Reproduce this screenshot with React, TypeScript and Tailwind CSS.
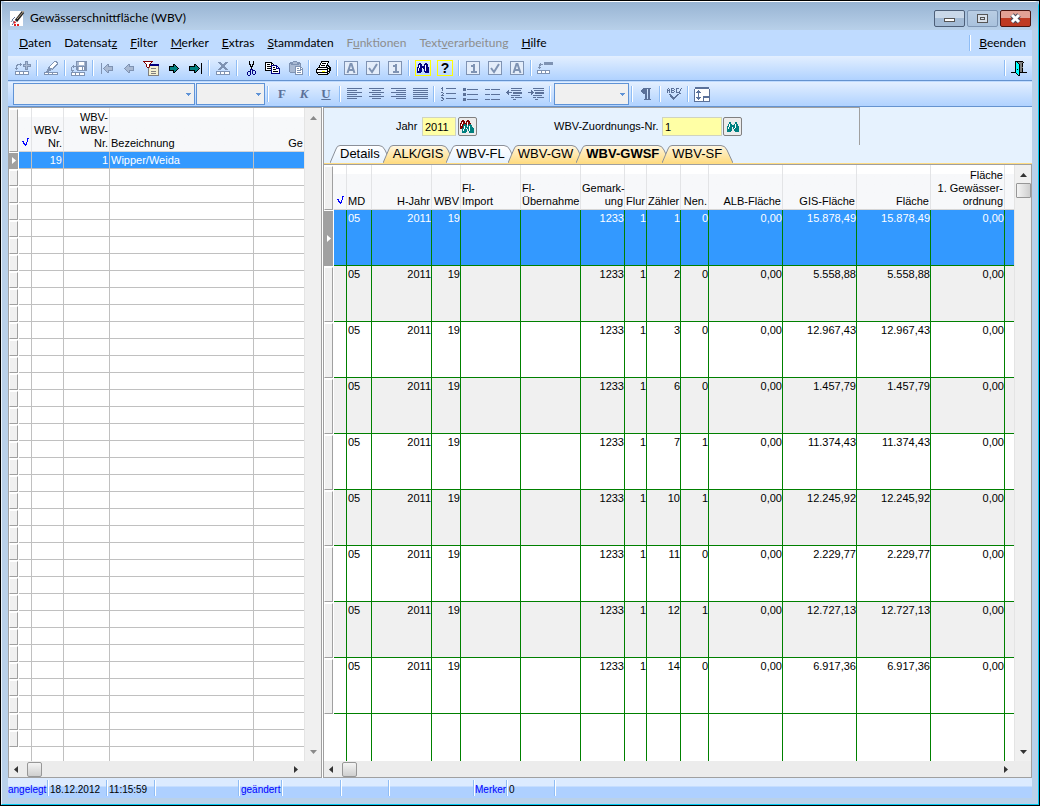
import type { ReactNode } from "react";
import { clsx } from "clsx";

const palette: Record<string, string> = {
    g: "#7f93b3",
    a: "#a9b9d2",
    d: "#5b7199",
    k: "#000000",
    w: "#ffffff",
    s: "#808080",
    t: "#008080",
    c: "#00ffff",
    b: "#000080",
    r: "#800000",
    y: "#ffff00",
    e: "#f4f0d0",
    u: "#0000ff",
};

const glyphs = {
    add: [
        "..........ggg...",
        "..........gag...",
        ".....g....gag...",
        "..ggggg.gggagggg",
        ".gg..g..gaaaaaag",
        ".g......gggagggg",
        ".g........gag...",
        "ggg.......gag...",
        ".g........ggg...",
        "................",
        "gggggggggggggg..",
        "gwwwgwwwgwwwwg..",
        "gwwwgwwwgwwwwg..",
        "gggggggggggggg..",
    ],
    edit: [
        "..........ggg..",
        ".........gwwgg.",
        "........gwwwwg.",
        ".......gwwwwgg.",
        "......gwwwwgg..",
        ".....gwwwwgg...",
        "....ggwwwgg....",
        "....ggggag.....",
        "...ggggag......",
        "...gggg........",
        "..ggg..........",
        "gggggggggggggg.",
        "gwwwgwwwgwwwwg.",
        "gggggggggggggg.",
    ],
    save: [
        ".....ggggggggggg",
        ".....gaawwwwwagg",
        ".....gaawwwwwagg",
        ".....gaawwwwwagg",
        "..g..gaaaaaaaagg",
        ".ggggggggggggggg",
        "g.g..ggawwwgwggg",
        "g....ggawwwgwggg",
        "g....ggawwwgwggg",
        "ggg...gggggggggg",
        ".g..............",
        "gggggggggggggg..",
        "gwwwgwwwgwwwwg..",
        "gwwwgwwwgwwwwg..",
        "gggggggggggggg..",
    ],
    first: [
        "g............",
        "g.....gg.....",
        "g....gag.....",
        "g...gaaggggg.",
        "g..gaaaaaaag.",
        "g.gaaaaaaaag.",
        "g..gaaaaaaag.",
        "g...gaaggggg.",
        "g....gag.....",
        "g.....gg.....",
        "g............",
    ],
    prev: [
        "....gg.....",
        "...gag.....",
        "..gaaggggg.",
        ".gaaaaaaag.",
        "gaaaaaaaag.",
        ".gaaaaaaag.",
        "..gaaggggg.",
        "...gag.....",
        "....gg.....",
    ],
    next: [
        ".....kk....",
        ".....ktk...",
        ".kkkkkttk..",
        ".ktttttttk.",
        ".kttttttttk",
        ".ktttttttk.",
        ".kkkkkttk..",
        ".....ktk...",
        ".....kk....",
    ],
    last: [
        "............k",
        ".....kk.....k",
        ".....ktk....k",
        "kkkkkkttk...k",
        "kttttttttk..k",
        "ktttttttttk.k",
        "kttttttttk..k",
        "kkkkkkttk...k",
        ".....ktk....k",
        ".....kk.....k",
        "............k",
    ],
    filter: [
        "rrrrrrrrrr......",
        ".rwwwwwwr.......",
        "..rwwwwr........",
        "...rwwrbbbbbbbbb",
        "...rwwrbbbbbbbbb",
        "...rwwreeeeeeees",
        "....rrseeeeeeees",
        ".....seesssssees",
        ".....seeeeeeeees",
        ".....seeeeeeeees",
        ".....seesssssees",
        ".....seeeeeeeees",
        ".....seesssssees",
        ".....seeeeeeeees",
        ".....sssssssssss",
    ],
    remove: [
        "..ggg....ggg.",
        "...ggg..ggg..",
        "....gggggg...",
        ".....gggg....",
        ".....gggg....",
        "....gggggg...",
        "...ggg..ggg..",
        "..ggg....ggg.",
        ".............",
        "gggggggggggggg",
        "gwwwgwwwgwwwwg",
        "gwwwgwwwgwwwwg",
        "gggggggggggggg",
    ],
    cut: [
        "..k...k..",
        "..k...k..",
        "..k...k..",
        "..kk.kk..",
        "...k.k...",
        "...kkk...",
        "....k....",
        "....k....",
        "...bbb...",
        "...b.bbb.",
        ".bbb.b..b",
        "b..b.b..b",
        "b..b.b..b",
        "b..b..bb.",
        ".bb......",
    ],
    copy: [
        "kkkkkkk.........",
        "kwwwwwkk........",
        "kwkkkwkwk.......",
        "kwwwwwbbbbbb....",
        "kwkkkkbwwwwbb...",
        "kwwwwwbwkkwbwb..",
        "kwkkkkbwwwwbbbb.",
        "kwwwwwbwkkkwwwb.",
        "kkkkkkbwwwwwwwb.",
        "......bwkkkkkwb.",
        "......bwwwwwwwb.",
        "......bbbbbbbbb.",
    ],
    paste: [
        ".....gggg......",
        "..gggaaaaggg...",
        ".ggggaaaagggg..",
        ".gaggggggggag..",
        ".gaaaaaaaaaag..",
        ".gaaaaagggggg..",
        ".gaaaaagwwwwgg.",
        ".gaaaaagwggwgwg",
        ".gaaaaagwwwwggg",
        ".gaaaaagwggggwg",
        ".gaaaaagwwwwwwg",
        "..ggggggwggggwg",
        ".......gwwwwwwg",
        ".......gggggggg",
    ],
    print: [
        ".....kkkkkkkk..",
        ".....kwwwwwwk..",
        "....kwkkkkwk...",
        "....kwwwwwwk...",
        "...kwkkkkwkkk..",
        "...kwwwwwwk.kk.",
        "..kkkkkkkkkkwkk",
        ".kwwwwwwwwwkkkk",
        "kkkkkkkkkkkkwkk",
        "kwwwwwwwwwwkwkk",
        "kwwwwwyyywwkkk.",
        "kkkkkkkkkkkkwk.",
        ".kwwwwwwwwwkk..",
        "..kkkkkkkkkk...",
    ],
    binoculars: [
        "..bb....bb..",
        ".bbbb..bbbb.",
        ".bwbb..bwbb.",
        ".bwbbbbbwbb.",
        "bbwbbbbbwbbb",
        "bwbbbwbbwbbb",
        "bwbbb..bwbbb",
        "bwbbb..bwbbb",
        "bbbbb..bbbbb",
        "bbbb....bbbb",
    ],
    find: [
        "...tt....tt..",
        "...tt....tt..",
        "..twtt..twtt.",
        "..twtttttwtt.",
        ".ttwtttttwttt",
        ".twtttwttwttt",
        ".twttt.twtttt",
        ".ttttt..ttttt",
        ".ttttt..ttttt",
        ".tttt....tttt",
    ],
    findRed: [
        "..rr...rr......",
        ".rrrr.rrrr.....",
        ".rwrr.rwrr.....",
        "rrwrrrrwrrr....",
        "rwrrttrwrtt....",
        "rwrtttt.tttt...",
        "rrrtwtt.twtt...",
        "rrrtwttttwttt..",
        "rrttwtwttwtttt.",
        "..twttt.twtttt.",
        "..twttt.twtttt.",
        "..ttttt..ttttt.",
        "..tttt...ttttt.",
    ],
    relation: [
        ".......ggggggggg",
        "...g...ggggggggg",
        "..gggg.ggggggggg",
        "..gg............",
        "..g.............",
        ".ggg............",
        "..g.............",
        "................",
        "ggggggggggggg...",
        "gwwwgwwwgwwwg...",
        "gwwwgwwwgwwwg...",
        "ggggggggggggg...",
    ],
    exit: [
        "....kkkkkkkk....",
        "....kcksssssk...",
        "....kccksssk....",
        "....kccckssk....",
        "....kccckssk....",
        "....kccckssk....",
        "....kcccksss....",
        "....kccckssk....",
        "....kckckssk....",
        "....kccckssk....",
        "....kccckssk....",
        "kkkkkccckkkkkkkk",
        ".....kcck.......",
        "......kck.......",
        ".......kk.......",
    ],
    numbered: [
        ".d.............",
        "dd...dddddddddd",
        ".d.............",
        ".d.............",
        "...............",
        "dd.............",
        "..d..dddddddddd",
        ".d.............",
        "ddd............",
        "...............",
        "dd.............",
        ".dd..dddddddddd",
        "..d............",
        "dd.............",
    ],
    bullets: [
        "ddd............",
        "ddd.ddddddddddd",
        "ddd............",
        "...............",
        "...............",
        "ddd............",
        "ddd.ddddddddddd",
        "ddd............",
        "...............",
        "...............",
        "ddd............",
        "ddd.ddddddddddd",
        "ddd............",
    ],
    dashes: [
        "ddddd.ddddddddd",
        "...............",
        "...............",
        "...............",
        "...............",
        "ddddd.ddddddddd",
        "...............",
        "...............",
        "...............",
        "...............",
        "ddddd.ddddddddd",
    ],
    outdent: [
        ".....ddddddddddd",
        "................",
        "..d..dddddddddd.",
        ".dd.............",
        "dddddd.ddddddddd",
        ".dd....ddddddddd",
        "..d.............",
        ".....ddddddddd..",
        "................",
        ".....ddd.ddddddd",
        "................",
        ".......ddd......",
    ],
    indent: [
        ".....ddddddddddd",
        "................",
        "...d..dddddddddd",
        "...dd...........",
        "dddddd.ddddddddd",
        "...dd..ddddddddd",
        "...d............",
        ".....ddddddddd..",
        "................",
        ".....ddd.ddddddd",
        "................",
        ".......ddd......",
    ],
    pilcrow: [
        "..dddddddd",
        ".ddddd.dd.",
        "dddddd.dd.",
        "dddddd.dd.",
        ".ddddd.dd.",
        "..dddd.dd.",
        "....dd.dd.",
        "....dd.dd.",
        "....dd.dd.",
        "....dd.dd.",
        "....dd.dd.",
        "...ddddddd",
    ],
    spell: [
        ".d..ddd..ddd..d",
        "d.d.d..d.d...d.",
        "ddd.ddd..d...d.",
        "d.d.d..d.d..d..",
        "d.d.ddd..dddd..",
        "............dd.",
        "..dd......dd...",
        "...dd....dd....",
        "...ddd..dd.....",
        "....ddddd......",
        ".....ddd.......",
        "......d........",
    ],
    rowHeight: [
        ".dddddddddddddd.",
        ".dddddddddddddd.",
        "dwwwwwwwwwwwwwwd",
        "dwwwdwwwwwwwwwwd",
        "dwwdddwwwwwwwwwd",
        "dwdddddwwwwwwwwd",
        "dwwwdwwwwwwwwwwd",
        "dwwwdwwwwwwwwwwd",
        "dwwwdwwwwwwwwwwd",
        "dwwwdwwwwddddddd",
        "dwdddddwwddddddd",
        "dwwdddwwwdwwwwwd",
        "dwwwdwwwwdwwwwwd",
        "dwwwwwwwwdwwwwwd",
        "dddddddddddddddd",
    ],
    check: [
        ".....uu",
        ".....u.",
        ".....u.",
        "uu...u.",
        ".u..u..",
        ".uu.u..",
        "..uuu..",
        "...u...",
    ],
};

const Pixels = ({ name }: { name: keyof typeof glyphs }) => {
    const rows = glyphs[name];
    const width = Math.max(...rows.map((r) => r.length));
    return (
        <svg width={width} height={rows.length} shapeRendering="crispEdges" aria-hidden="true" className="shrink-0">
            {rows.flatMap((row, y) =>
                [...row].map((c, x) =>
                    c === "." ? null : <rect key={`${x}-${y}`} x={x} y={y} width={1} height={1} fill={palette[c]} />
                )
            )}
        </svg>
    );
};

const ToolButton = ({ label, children }: { label: string; children: ReactNode }) => (
    <button type="button" aria-label={label} className="flex h-[22px] w-[22px] shrink-0 items-center justify-center">
        {children}
    </button>
);

const Separator = () => (
    <div className="flex w-[6px] shrink-0 justify-center">
        <div className="h-4 w-[2px] border-l border-r border-l-[#8fbdf5] border-r-white" />
    </div>
);

const BoxIcon = ({ kind }: { kind: "A" | "1" | "check" }) => (
    <svg width="14" height="14" shapeRendering="crispEdges" aria-hidden="true" fill="none" stroke="#7f93b3">
        <rect x="0.5" y="0.5" width="13" height="13" fill="#e4edfa" />
        {kind === "A" && <path strokeWidth="2" shapeRendering="auto" d="M3.5 12L6.5 3H7.5L10.5 12M5 9H9" />}
        {kind === "1" && <path strokeWidth="2" d="M5 5h3M8 3v9M5 11h6" />}
        {kind === "check" && <path strokeWidth="2" shapeRendering="auto" d="M3 7L6 11L11 3" />}
    </svg>
);

const AlignIcon = ({ widths, right, center }: { widths: number[]; right?: boolean; center?: boolean }) => (
    <svg width="15" height="12" shapeRendering="crispEdges" aria-hidden="true">
        {widths.map((w, i) => (
            <rect key={i} x={right ? 15 - w : center ? Math.floor((15 - w) / 2) : 0} y={i * 2} width={w} height={1} fill="#5b7199" />
        ))}
    </svg>
);

const Combo = ({ label, className }: { label: string; className: string }) => (
    <div className={clsx("relative h-[22px]", className)}>
        <select aria-label={label} className="h-full w-full appearance-none border border-[#5f93d6] bg-[#f0f0f0]">
            <option></option>
        </select>
        <svg width="5" height="3" shapeRendering="crispEdges" className="pointer-events-none absolute right-1 top-[10px]" aria-hidden="true">
            <path d="M0 0h5v1H4v1H3v1H2V2H1V1H0z" fill="#5f93d6" />
        </svg>
    </div>
);

const menus = [
    { before: "", key: "D", after: "aten" },
    { before: "Datensat", key: "z", after: "" },
    { before: "", key: "F", after: "ilter" },
    { before: "", key: "M", after: "erker" },
    { before: "", key: "E", after: "xtras" },
    { before: "", key: "S", after: "tammdaten" },
    { before: "F", key: "u", after: "nktionen", disabled: true },
    { before: "Text", key: "v", after: "erarbeitung", disabled: true },
    { before: "", key: "H", after: "ilfe" },
];

const TitleBar = () => (
    <header className="flex h-[28px] shrink-0 items-center bg-linear-to-b from-[#98b4d3] to-[#b8d0e9] px-[7px] pt-[4px]">
        <svg width="17" height="17" aria-hidden="true">
            <path d="M1 1h13v15H1z" fill="#fff" />
            <path d="M2 12c2-4 4 1 1 3M6 7l-3 3" stroke="#5b7199" fill="none" />
            <path d="M5 15h6M5 13l2-2" stroke="#e02020" strokeWidth="2" strokeDasharray="2 1" fill="none" />
            <path d="M7 11L14 2" stroke="#222" strokeWidth="3" />
            <path d="M8 9L15 1" stroke="#b9a48a" strokeWidth="1" />
        </svg>
        <h1 className="ml-1 grow font-[Lato,sans-serif] text-[12px] text-black">Gewässerschnittfläche (WBV)</h1>
        <div className="flex gap-[2px]">
            <button type="button" aria-label="Minimieren" className="flex h-[17px] w-[31px] items-center justify-center rounded-[2px] border border-[#4d5f78] bg-linear-to-b from-[#c9d8e9] from-50% to-[#a3bbd6] to-50% pt-1">
                <span className="h-[4px] w-[11px] border border-[#555] bg-white" />
            </button>
            <button type="button" aria-label="Maximieren" className="flex h-[17px] w-[31px] items-center justify-center rounded-[2px] border border-[#7e96b4] bg-linear-to-b from-[#b9cde3] to-[#a9c2dd]">
                <span className="flex h-[9px] w-[11px] items-center justify-center border border-[#555] bg-[#d8e0ea]">
                    <span className="h-[3px] w-[5px] border border-[#555]" />
                </span>
            </button>
            <button type="button" aria-label="Schließen" className="flex h-[17px] w-[31px] items-center justify-center rounded-[2px] border border-[#4b1510] bg-linear-to-b from-[#e3a195] from-45% to-[#bf3a22] to-50%">
                <svg width="13" height="11" aria-hidden="true">
                    <path d="M3 2l7 7M10 2l-7 7" stroke="#4a4a5a" strokeWidth="5" />
                    <path d="M3 2l7 7M10 2l-7 7" stroke="#fff" strokeWidth="3" />
                </svg>
            </button>
        </div>
    </header>
);

const MenuBar = () => (
    <nav className="flex h-[26px] shrink-0 items-center gap-[13px] bg-[#bfdbff] pl-[11px] pr-[6px] font-[Lato,sans-serif] text-[12px] text-black">
        {menus.map((m) => (
            <button key={m.before + m.key + m.after} type="button" disabled={m.disabled} className="disabled:text-[#8d8d8d]">
                {m.before}
                <span className="underline">{m.key}</span>
                {m.after}
            </button>
        ))}
        <div className="ml-auto flex items-center gap-[6px]">
            <Separator />
            <button type="button">
                <span className="underline">B</span>eenden
            </button>
        </div>
    </nav>
);

const toolbarClass =
    "flex shrink-0 items-center bg-linear-to-b from-[#e3efff] to-[#b0d2ff] border-b border-[#6593cf] h-[25px]";

const MainToolbar = () => (
    <div role="toolbar" className={clsx(toolbarClass, "pl-[4px] pr-[2px]")}>
        <ToolButton label="Neu"><Pixels name="add" /></ToolButton>
        <Separator />
        <ToolButton label="Bearbeiten"><Pixels name="edit" /></ToolButton>
        <Separator />
        <ToolButton label="Speichern"><Pixels name="save" /></ToolButton>
        <Separator />
        <ToolButton label="Erster"><Pixels name="first" /></ToolButton>
        <ToolButton label="Zurück"><Pixels name="prev" /></ToolButton>
        <ToolButton label="Filter"><Pixels name="filter" /></ToolButton>
        <ToolButton label="Vor"><Pixels name="next" /></ToolButton>
        <ToolButton label="Letzter"><Pixels name="last" /></ToolButton>
        <Separator />
        <ToolButton label="Löschen"><Pixels name="remove" /></ToolButton>
        <Separator />
        <ToolButton label="Ausschneiden"><Pixels name="cut" /></ToolButton>
        <ToolButton label="Kopieren"><Pixels name="copy" /></ToolButton>
        <ToolButton label="Einfügen"><Pixels name="paste" /></ToolButton>
        <Separator />
        <ToolButton label="Drucken"><Pixels name="print" /></ToolButton>
        <Separator />
        <ToolButton label="Alle"><BoxIcon kind="A" /></ToolButton>
        <ToolButton label="Markierte"><BoxIcon kind="check" /></ToolButton>
        <ToolButton label="Einzeln"><BoxIcon kind="1" /></ToolButton>
        <Separator />
        <ToolButton label="Suchen">
            <span className="flex h-4 w-4 items-center justify-center border border-[#ffff00]"><Pixels name="binoculars" /></span>
        </ToolButton>
        <ToolButton label="Hilfe">
            <span className="flex h-4 w-4 items-center justify-center border border-[#ffff00] text-[14px] leading-none font-bold text-black">?</span>
        </ToolButton>
        <Separator />
        <ToolButton label="Einen entfernen"><BoxIcon kind="1" /></ToolButton>
        <ToolButton label="Markierte entfernen"><BoxIcon kind="check" /></ToolButton>
        <ToolButton label="Alle entfernen"><BoxIcon kind="A" /></ToolButton>
        <Separator />
        <ToolButton label="Beziehungen"><Pixels name="relation" /></ToolButton>
        <div className="ml-auto flex items-center">
            <Separator />
            <ToolButton label="Beenden"><Pixels name="exit" /></ToolButton>
        </div>
    </div>
);

const FormatToolbar = () => (
    <div role="toolbar" className={clsx(toolbarClass, "pl-[5px]")}>
        <Combo label="Schriftart" className="w-[182px]" />
        <Combo label="Schriftgröße" className="ml-px w-[69px]" />
        <Separator />
        <div className="flex font-['Liberation_Serif',serif] text-[13px] font-bold text-[#5b7199]">
            <ToolButton label="Fett">F</ToolButton>
            <ToolButton label="Kursiv"><i>K</i></ToolButton>
            <ToolButton label="Unterstrichen"><u>U</u></ToolButton>
        </div>
        <Separator />
        <ToolButton label="Linksbündig"><AlignIcon widths={[15, 10, 15, 10, 15, 10]} /></ToolButton>
        <ToolButton label="Zentriert"><AlignIcon center widths={[15, 9, 15, 9, 15, 9]} /></ToolButton>
        <ToolButton label="Rechtsbündig"><AlignIcon right widths={[15, 10, 15, 10, 15, 10]} /></ToolButton>
        <ToolButton label="Blocksatz"><AlignIcon widths={[15, 15, 15, 15, 15, 15]} /></ToolButton>
        <Separator />
        <ToolButton label="Nummerierung"><Pixels name="numbered" /></ToolButton>
        <ToolButton label="Aufzählung"><Pixels name="bullets" /></ToolButton>
        <ToolButton label="Liste"><Pixels name="dashes" /></ToolButton>
        <ToolButton label="Einzug verkleinern"><Pixels name="outdent" /></ToolButton>
        <ToolButton label="Einzug vergrößern"><Pixels name="indent" /></ToolButton>
        <Separator />
        <Combo label="Zoom" className="ml-px w-[75px]" />
        <Separator />
        <ToolButton label="Absatzmarken"><Pixels name="pilcrow" /></ToolButton>
        <Separator />
        <ToolButton label="Rechtschreibung"><Pixels name="spell" /></ToolButton>
        <Separator />
        <ToolButton label="Zeilenhöhe"><Pixels name="rowHeight" /></ToolButton>
    </div>
);

const Arrow = ({ dir, muted }: { dir: "up" | "down" | "left" | "right"; muted?: boolean }) => (
    <svg
        width="7"
        height="7"
        aria-hidden="true"
        className={clsx(muted ? "fill-[#8a8a8a]" : "fill-[#333]", {
            "rotate-180": dir === "down",
            "-rotate-90": dir === "left",
            "rotate-90": dir === "right",
        })}
    >
        <path d="M0 5h7L3.5 1z" />
    </svg>
);

const VScroll = ({ thumb, muted }: { thumb?: boolean; muted?: boolean }) => (
    <div className="flex w-[17px] shrink-0 flex-col items-center border-l border-[#e4e4e4] bg-[#f0f0f0] pb-1 pt-1">
        <button type="button" aria-label="Nach oben" className="flex h-[14px] items-center pb-px"><Arrow dir="up" muted={muted} /></button>
        {thumb && <div className="h-[15px] w-[15px] rounded-[1px] border border-[#979797] bg-linear-to-r from-[#f4f4f4] to-[#cfcfcf]" />}
        <button type="button" aria-label="Nach unten" className="mt-auto flex h-[11px] items-center"><Arrow dir="down" muted={muted} /></button>
    </div>
);

const HScroll = () => (
    <div className="flex h-[16px] shrink-0 items-center bg-[#ececec] pl-1 pr-[22px]">
        <button type="button" aria-label="Nach links" className="flex w-[14px] items-center"><Arrow dir="left" /></button>
        <div className="h-[15px] w-[15px] rounded-[2px] border border-[#979797] bg-linear-to-b from-[#f4f4f4] to-[#cfcfcf]" />
        <button type="button" aria-label="Nach rechts" className="ml-auto flex items-center"><Arrow dir="right" /></button>
    </div>
);

const handleClass = "w-[9px] border border-b-[#a0a0a0] border-l-white border-r-[#a0a0a0] border-t-white bg-[#f0f0f0]";

const SelectedHandle = ({ className }: { className: string }) => (
    <div className={clsx("flex w-[9px] items-center justify-center bg-[#a0a0a0]", className)}>
        <svg width="4" height="7" aria-hidden="true"><path d="M0 0v7l4-3.5z" fill="#fff" /></svg>
    </div>
);

const headGradient = "bg-linear-to-b from-white from-20% to-[#f7f8fa] to-20%";
const headCell = "border-b border-r border-b-[#d5d5d5] border-r-[#e3e4e6] px-px pb-px align-bottom font-normal";
const leftCell = "h-[17px] border-b border-r border-[#c0c0c0] px-px leading-[16px]";

const AreaList = () => (
    <section className="flex w-[314px] shrink-0 flex-col border border-[#a0a0a0] bg-white">
        <div className="flex min-h-0 grow">
            <div className="min-w-0 grow overflow-hidden">
                <table className="h-full w-full table-fixed border-separate border-spacing-0 text-right">
                    <colgroup>
                        <col className="w-[10px]" />
                        <col className="w-[13px]" />
                        <col className="w-[32px]" />
                        <col className="w-[46px]" />
                        <col className="w-[144px]" />
                        <col />
                    </colgroup>
                    <thead>
                        <tr className={clsx("h-[44px] leading-[13px]", headGradient)}>
                            <th className="p-0"><div className={clsx("h-[43px]", handleClass)} /></th>
                            <th className={headCell}><div className="flex justify-center pb-1"><Pixels name="check" /></div></th>
                            <th className={headCell}>WBV-<br />Nr.</th>
                            <th className={headCell}>WBV-<br />WBV-<br />Nr.</th>
                            <th className={clsx(headCell, "text-left")}>Bezeichnung</th>
                            <th className={clsx(headCell, "border-r-0")}>Ge</th>
                        </tr>
                    </thead>
                    <tbody>
                        <tr className="bg-[#3399ff] text-white">
                            <td className="bg-white p-0"><SelectedHandle className="h-[16px]" /></td>
                            <td className={leftCell} />
                            <td className={leftCell}>19</td>
                            <td className={leftCell}>1</td>
                            <td className={clsx(leftCell, "text-left")}>Wipper/Weida</td>
                            <td className={clsx(leftCell, "border-r-0")} />
                        </tr>
                        {Array.from({ length: 34 }, (_, i) => (
                            <tr key={i}>
                                <td className="p-0"><div className={clsx("h-[16px]", handleClass)} /></td>
                                <td className={leftCell} />
                                <td className={leftCell} />
                                <td className={leftCell} />
                                <td className={leftCell} />
                                <td className={clsx(leftCell, "border-r-0")} />
                            </tr>
                        ))}
                        <tr>
                            <td />
                            <td className="border-r border-[#c0c0c0]" />
                            <td className="border-r border-[#c0c0c0]" />
                            <td className="border-r border-[#c0c0c0]" />
                            <td className="border-r border-[#c0c0c0]" />
                            <td />
                        </tr>
                    </tbody>
                </table>
            </div>
            <VScroll muted />
        </div>
        <HScroll />
    </section>
);

const tabs = [
    { label: "Details" },
    { label: "ALK/GIS", warm: true },
    { label: "WBV-FL" },
    { label: "WBV-GW", warm: true },
    { label: "WBV-GWSF", warm: true, active: true },
    { label: "WBV-SF", warm: true },
];

const TabBar = () => (
    <div role="tablist" className="flex h-[18px] pl-[6px]">
        <svg width="0" height="0" className="absolute" aria-hidden="true">
            <linearGradient id="warm" gradientUnits="userSpaceOnUse" x1="0" x2="0" y1="0" y2="18">
                <stop offset="0" stopColor="#fff6df" />
                <stop offset="1" stopColor="#ffdc82" />
            </linearGradient>
            <linearGradient id="cool" gradientUnits="userSpaceOnUse" x1="0" x2="0" y1="0" y2="18">
                <stop offset="0" stopColor="#ffffff" />
                <stop offset="1" stopColor="#e6f2fe" />
            </linearGradient>
        </svg>
        {tabs.map((t) => (
            <button
                key={t.label}
                type="button"
                role="tab"
                aria-selected={!!t.active}
                className={clsx("relative flex pl-[10px] pr-[3px] text-[13px] leading-[18px] text-black", t.active && "font-bold")}
            >
                <div className="absolute inset-y-0 left-0 -right-[8px] flex" aria-hidden="true">
                    <svg width="10" height="18" className="shrink-0">
                        <path d="M0 18L6 4Q7 .5 10 .5V18z" fill={t.warm ? "url(#warm)" : "url(#cool)"} />
                        <path d="M0 18L6 4Q7 .5 10 .5" fill="none" stroke="#8a8f98" />
                    </svg>
                    <div
                        className={clsx(
                            "grow border-t border-[#8a8f98] bg-linear-to-b",
                            t.warm ? "from-[#fff6df] to-[#ffdc82]" : "from-white to-[#e6f2fe]"
                        )}
                    />
                    <svg width="12" height="18" className="shrink-0">
                        <path d="M0 .5Q4 .5 6 5L12 18H0z" fill={t.warm ? "url(#warm)" : "url(#cool)"} />
                        <path d="M0 .5Q4 .5 6 5L12 18" fill="none" stroke="#8a8f98" />
                    </svg>
                </div>
                <span className="relative">{t.label}</span>
            </button>
        ))}
    </div>
);

const SearchFields = () => (
    <form className="flex h-[38px] max-w-[536px] items-center border-r border-t border-[#a0a0a0] pl-[72px]">
        <label htmlFor="jahr" className="w-[26px]">Jahr</label>
        <input id="jahr" defaultValue="2011" className="h-[19px] w-[34px] border border-[#d0d4c0] bg-[#ffffa5] px-[2px]" />
        <button type="button" aria-label="Jahr suchen" className="ml-[2px] flex h-[19px] w-[19px] items-center justify-center rounded-[2px] border border-[#808080] bg-[#ececec]">
            <Pixels name="findRed" />
        </button>
        <label htmlFor="zuordnung" className="ml-[77px] w-[108px]">WBV-Zuordnungs-Nr.</label>
        <input id="zuordnung" defaultValue="1" className="h-[19px] w-[60px] border border-[#d0d4c0] bg-[#ffffa5] px-[2px]" />
        <button type="button" aria-label="Zuordnung suchen" className="ml-px flex h-[19px] w-[19px] items-center justify-center rounded-[2px] border border-[#808080] bg-[#ececec]">
            <Pixels name="find" />
        </button>
    </form>
);

const parcels = [
    { zaehler: "1", nen: "0", area: "15.878,49" },
    { zaehler: "2", nen: "0", area: "5.558,88" },
    { zaehler: "3", nen: "0", area: "12.967,43" },
    { zaehler: "6", nen: "0", area: "1.457,79" },
    { zaehler: "7", nen: "1", area: "11.374,43" },
    { zaehler: "10", nen: "1", area: "12.245,92" },
    { zaehler: "11", nen: "0", area: "2.229,77" },
    { zaehler: "12", nen: "1", area: "12.727,13" },
    { zaehler: "14", nen: "0", area: "6.917,36" },
];

const gridCell = "h-[56px] border-b border-r border-[#008000] pl-px pt-[2px] align-top leading-[13px]";

const ParcelGrid = () => (
    <table className="h-full w-full table-fixed border-separate border-spacing-0 text-right">
        <colgroup>
            <col className="w-[10px]" />
            <col className="w-[13px]" />
            <col className="w-[25px]" />
            <col className="w-[60px]" />
            <col className="w-[29px]" />
            <col className="w-[60px]" />
            <col className="w-[60px]" />
            <col className="w-[44px]" />
            <col className="w-[22px]" />
            <col className="w-[34px]" />
            <col className="w-[28px]" />
            <col className="w-[74px]" />
            <col className="w-[74px]" />
            <col className="w-[74px]" />
            <col className="w-[74px]" />
            <col />
        </colgroup>
        <thead>
            <tr className={clsx("h-[45px] leading-[13px]", headGradient)}>
                <th className="p-0"><div className={clsx("h-[44px]", handleClass)} /></th>
                <th className={headCell}><div className="flex justify-center pb-1"><Pixels name="check" /></div></th>
                <th className={clsx(headCell, "text-left")}>MD</th>
                <th className={headCell}>H-Jahr</th>
                <th className={headCell}>WBV</th>
                <th className={clsx(headCell, "text-left")}>Fl-<br />Import</th>
                <th className={clsx(headCell, "text-left")}>Fl-<br />Übernahme</th>
                <th className={headCell}>Gemark-<br />ung</th>
                <th className={headCell}>Flur</th>
                <th className={headCell}>Zähler</th>
                <th className={headCell}>Nen.</th>
                <th className={headCell}>ALB-Fläche</th>
                <th className={headCell}>GIS-Fläche</th>
                <th className={headCell}>Fläche</th>
                <th className={headCell}>Fläche<br />1. Gewässer-<br />ordnung</th>
                <th className={clsx(headCell, "border-r-0")} />
            </tr>
        </thead>
        <tbody>
            {parcels.map((p, i) => (
                <tr key={p.zaehler} className={i === 0 ? "bg-[#3399ff] text-white" : i % 2 ? "bg-[#f0f0f0]" : "bg-white"}>
                    <td className="bg-white p-0">
                        {i === 0 ? <SelectedHandle className="h-[55px]" /> : <div className={clsx("h-[55px]", handleClass)} />}
                    </td>
                    <td className={gridCell} />
                    <td className={clsx(gridCell, "text-left")}>05</td>
                    <td className={gridCell}>2011</td>
                    <td className={gridCell}>19</td>
                    <td className={gridCell} />
                    <td className={gridCell} />
                    <td className={gridCell}>1233</td>
                    <td className={gridCell}>1</td>
                    <td className={gridCell}>{p.zaehler}</td>
                    <td className={gridCell}>{p.nen}</td>
                    <td className={gridCell}>0,00</td>
                    <td className={gridCell}>{p.area}</td>
                    <td className={gridCell}>{p.area}</td>
                    <td className={gridCell}>0,00</td>
                    <td className={clsx(gridCell, "border-r-0")} />
                </tr>
            ))}
            <tr>
                <td />
                {Array.from({ length: 14 }, (_, i) => (
                    <td key={i} className="border-r border-[#008000]" />
                ))}
                <td />
            </tr>
        </tbody>
    </table>
);

const DetailPane = () => (
    <section className="flex min-w-0 grow flex-col border-l border-[#a0a0a0] bg-[#e6f2fe]">
        <SearchFields />
        <TabBar />
        <div className="h-[2px] shrink-0 border-b border-[#a0a0a0] bg-[#ffdc82]" />
        <div className="flex min-h-0 grow flex-col border-b border-r border-[#a0a0a0] bg-white">
            <div className="flex min-h-0 grow">
                <div className="min-w-0 grow overflow-hidden">
                    <ParcelGrid />
                </div>
                <VScroll thumb />
            </div>
            <HScroll />
        </div>
    </section>
);

const status = [
    { text: "angelegt", className: "w-[41px] text-[#0000ff]" },
    { text: "18.12.2012", className: "w-[59px] pl-px text-black" },
    { text: "11:15:59", className: "w-[48px] pl-px text-black" },
    { text: "", className: "w-[84px]" },
    { text: "geändert", className: "w-[43px] pl-px text-[#0000ff]" },
    { text: "", className: "w-[59px]" },
    { text: "", className: "w-[48px]" },
    { text: "", className: "w-[85px]" },
    { text: "Merker", className: "w-[33px] text-[#0000ff]" },
    { text: "0", className: "w-[48px] pl-px text-black" },
];

const StatusBar = () => (
    <footer className="flex h-[20px] shrink-0 items-center bg-linear-to-b from-[#dcebff] from-40% to-[#aed0ff] to-45%">
        {status.map((s, i) => (
            <div
                key={i}
                className={clsx(
                    "flex h-[16px] items-center whitespace-nowrap border-r border-white pt-[2px] text-[10px] shadow-[inset_-1px_0_0_#8fbdf5]",
                    s.className
                )}
            >
                {s.text}
            </div>
        ))}
    </footer>
);

export default function App() {
    return (
        <div className="flex h-screen flex-col overflow-hidden border border-black bg-[#b9d1ea] font-['Liberation_Sans',Arial,sans-serif] text-[11px] text-black">
            <div className="flex min-h-0 grow flex-col rounded-t-[5px] border border-b-[#00c8f0] border-l-[#e8f2fb] border-r-[#00c8f0] border-t-white">
                <TitleBar />
                <div className="mx-[6px] mb-[6px] flex min-h-0 grow flex-col bg-[#bfdbff]">
                    <MenuBar />
                    <MainToolbar />
                    <div className="h-px shrink-0" />
                    <FormatToolbar />
                    <main className="flex min-h-0 grow gap-px bg-white">
                        <AreaList />
                        <DetailPane />
                    </main>
                    <StatusBar />
                </div>
            </div>
        </div>
    );
}
